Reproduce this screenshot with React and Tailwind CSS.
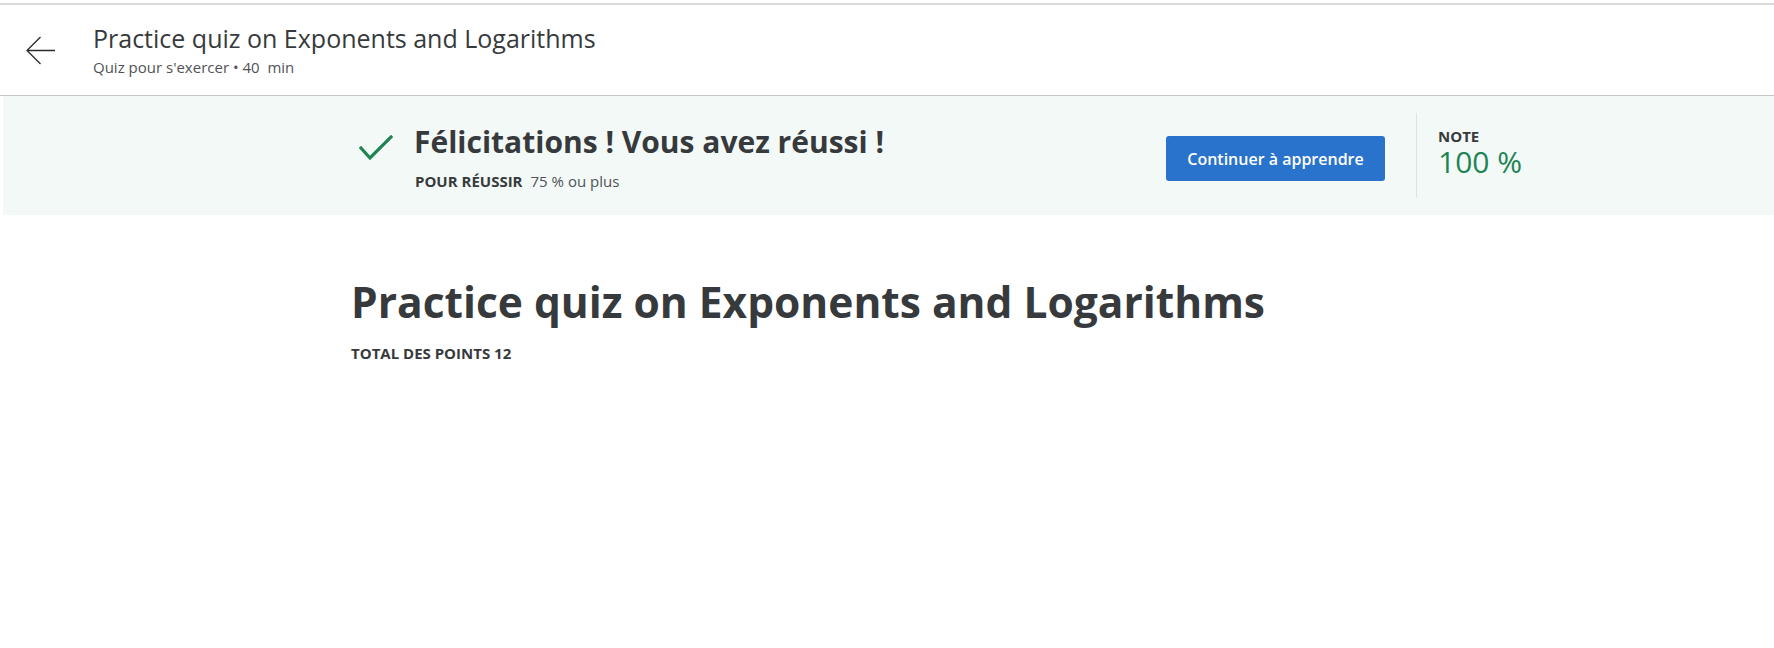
function CheckMark() {
  return (
    <svg width="34" height="26" viewBox="0 0 34 26" fill="none" className="block">
      <polyline points="2,13 11,23 32,2" stroke="#1f8354" strokeWidth="3.2" strokeLinecap="square" />
    </svg>
  )
}

export default function App() {
  return (
    <div className="min-h-[648px] bg-white font-['Open_Sans','Noto_Sans',sans-serif] text-[#373a3c]">
      <div className="h-[3px]" />
      <div className="h-[2px] bg-[#d8d8dd]" />

      <header className="flex h-[91px] border-b border-[#c6c6c6]">
        <button className="ml-[25px] mt-[30px] h-[31px] w-[31px] text-[#2b2b2b]">
          <svg width="31" height="31" viewBox="0 0 31 31" fill="none">
            <path d="M30 15.5H2M15.5 2L2 15.5L15.5 29" stroke="currentColor" strokeWidth="1.3" />
          </svg>
        </button>
        <div className="ml-[37px] mt-[18px]">
          <h2 className="text-[25px] leading-[30px] font-normal text-[#373a3c]">
            Practice quiz on Exponents and Logarithms
          </h2>
          <p className="mt-[4px] text-[15px] leading-[20px] text-[#505356]">
            Quiz pour s'exercer • 40&nbsp; min
          </p>
        </div>
      </header>

      <section className="ml-[3px] flex h-[119px] bg-[#f3f9f7] pl-[356px]">
        <div className="mt-[39px] w-[34px]">
          <CheckMark />
        </div>
        <div className="ml-[21px] mt-[28px] w-[752px]">
          <h3 className="text-[30px] leading-[36px] font-bold text-[#373a3c]">
            Félicitations ! Vous avez réussi !
          </h3>
          <p className="mt-[11px] ml-[1px] text-[15px] leading-[20px]">
            <span className="font-bold uppercase">Pour réussir</span>
            <span className="ml-[8px] text-[#505356]">75 % ou plus</span>
          </p>
        </div>
        <button className="mt-[40px] h-[45px] w-[219px] rounded-[3px] bg-[#2a73cc] text-[16px] font-semibold text-white">
          Continuer à apprendre
        </button>
        <div className="ml-[31px] mt-[17px] h-[85px] w-px bg-[#dfe3e1]" />
        <div className="ml-[21px] mt-[31px]">
          <p className="text-[15px] leading-[18px] font-bold uppercase text-[#373a3c]">Note</p>
          <p className="mt-[1px] text-[30px] leading-[32px] font-normal text-[#1f8354]">100 %</p>
        </div>
      </section>

      <main className="pl-[351px] pt-[61px]">
        <h1 className="text-[42.5px] leading-[52px] font-bold text-[#373a3c]">
          Practice quiz on Exponents and Logarithms
        </h1>
        <p className="mt-[15px] text-[15px] leading-[20px] font-bold uppercase text-[#373a3c]">
          Total des points 12
        </p>
      </main>
    </div>
  )
}
